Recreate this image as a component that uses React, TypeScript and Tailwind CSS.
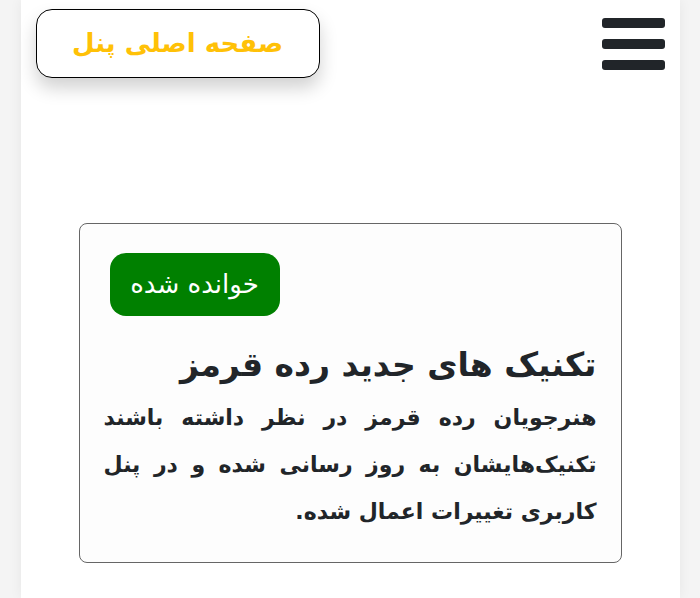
export default function App() {
  const lines = [
    "هنرجویان رده قرمز در نظر داشته باشند",
    "تکنیک‌هایشان به روز رسانی شده و در پنل",
  ];

  return (
    <div
      dir="rtl"
      className="min-h-screen bg-[#f4f4f4] flex justify-center"
      style={{ fontFamily: '"DejaVu Sans", "Noto Sans", sans-serif' }}
    >
      <div className="w-[659px] min-h-[598px] bg-white shadow-[0_0_12px_rgba(0,0,0,0.06)]">
        {/* Header */}
        <header className="flex justify-between items-start px-[15px] pt-[9px]">
          <button className="mt-[9px] w-[63px] flex flex-col gap-[11px]" aria-label="menu">
            <span className="block h-[10px] rounded-[3px] bg-[#212529]" />
            <span className="block h-[10px] rounded-[3px] bg-[#212529]" />
            <span className="block h-[10px] rounded-[3px] bg-[#212529]" />
          </button>
          <a className="w-[284px] h-[69px] flex items-center justify-center rounded-2xl border-[1.5px] border-black bg-white text-[#ffc107] text-[26px] font-semibold shadow-[0_10px_18px_rgba(0,0,0,0.18)]">
            صفحه اصلی پنل
          </a>
        </header>

        {/* Card */}
        <div className="mx-[58px] mt-[145px] rounded-lg border border-[#666] bg-[#fdfdfd] px-[24px] pt-[29px] pb-[27px] text-[#212529]">
          <div className="flex justify-end">
            <span className="ml-[6px] w-[170px] h-[63px] flex items-center justify-center rounded-2xl bg-[#008000] text-white text-[26px]">
              خوانده شده
            </span>
          </div>
          <h2 className="mt-[25px] text-[33px] font-bold leading-[48px]">تکنیک های جدید رده قرمز</h2>
          <div className="mt-[5px] text-[22px] font-semibold leading-[47px]">
            {lines.map((l) => (
              <p key={l} className="text-justify [text-align-last:justify]">
                {l}
              </p>
            ))}
            <p>کاربری تغییرات اعمال شده.</p>
          </div>
        </div>
      </div>
    </div>
  );
}
